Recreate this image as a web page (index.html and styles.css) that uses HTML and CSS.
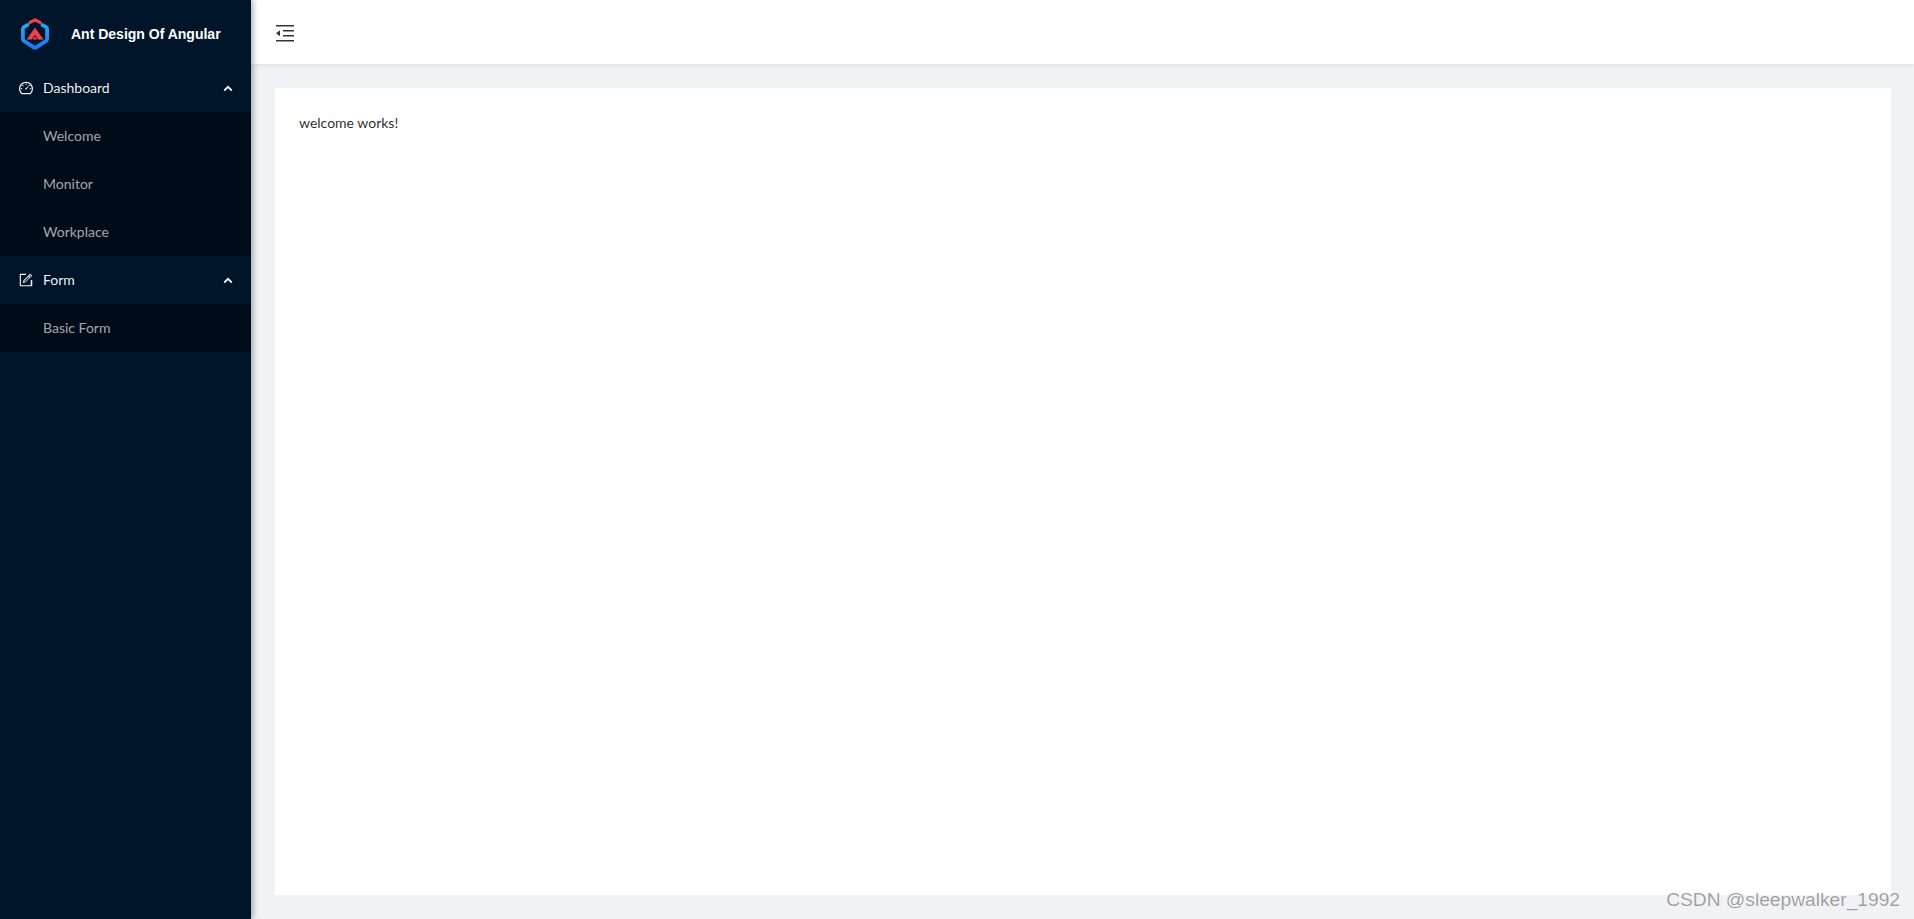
FILE: index.html
```html
<!DOCTYPE html>
<html lang="en">
<head>
<meta charset="utf-8">
<title>Ant Design Of Angular</title>
<link rel="stylesheet" href="styles.css">
</head>
<body>
<div class="layout">
  <aside class="sider">
    <div class="logo">
      <svg class="logo-mark" viewBox="0 0 28 32" width="28" height="32" aria-hidden="true">
        <defs>
          <linearGradient id="hexb" x1="0" y1="0" x2="0" y2="1">
            <stop offset="0" stop-color="#22a7f5"/>
            <stop offset="1" stop-color="#1a7df2"/>
          </linearGradient>
        </defs>
        <path d="M6.500 7 2.900 9.200Q1.900 9.800 1.900 11V21Q1.900 22.200 2.900 22.800L12.800 29.300Q14 30 15.200 29.300L25.100 22.800Q26.100 22.200 26.100 21V11Q26.100 9.800 25.100 9.200L21.500 7" fill="none" stroke="url(#hexb)" stroke-width="3.800" stroke-linejoin="round" stroke-linecap="round"/>
        <path d="M9 4.400 14 1.800 19 4.400" fill="none" stroke="#f0414f" stroke-width="3.200" stroke-linecap="round" stroke-linejoin="round"/>
        <path d="M14 10 6 21.300H10.600L14 16.500 17.400 21.300H22Z" fill="#f0414f" stroke="#f0414f" stroke-width=".6" stroke-linejoin="round"/>
        <path d="M11.500 21.500H16.500L14 18.200Z" fill="#f0414f"/>
      </svg>
      <h1 class="logo-title">Ant Design Of Angular</h1>
    </div>
    <nav class="menu">
      <div class="menu-head">
        <svg class="menu-icon" viewBox="64 64 896 896" width="14" height="14" fill="currentColor" aria-hidden="true"><path d="M924.800 385.600a446.700 446.700 0 0 0-96-142.400 446.700 446.700 0 0 0-142.400-96C631.100 123.800 572.500 112 512 112s-119.100 11.800-174.400 35.200a446.700 446.700 0 0 0-142.400 96 446.700 446.700 0 0 0-96 142.400C75.800 440.900 64 499.500 64 560c0 132.700 58.300 257.700 159.900 343.100l1.700 1.400c5.800 4.800 13.100 7.500 20.600 7.500h531.700c7.500 0 14.800-2.700 20.600-7.500l1.700-1.400C901.700 817.700 960 692.700 960 560c0-60.500-11.900-119.100-35.200-174.400zM761.400 836H262.600A371.120 371.120 0 0 1 140 560c0-99.400 38.700-192.800 109-263 70.300-70.300 163.700-109 263-109 99.400 0 192.800 38.700 263 109 70.300 70.300 109 163.700 109 263 0 105.600-44.800 205.400-122.600 276z"/><path d="M623.500 421.500a8.030 8.030 0 0 0-11.300 0L527.700 506c-18.700-5-39.400-.2-54.100 14.500a55.950 55.950 0 0 0 0 79.200 55.950 55.950 0 0 0 79.200 0 55.870 55.870 0 0 0 14.500-54.100l84.500-84.500c3.100-3.100 3.100-8.200 0-11.300l-28.300-28.300zM490 320h44c4.400 0 8-3.600 8-8v-80c0-4.400-3.600-8-8-8h-44c-4.400 0-8 3.600-8 8v80c0 4.400 3.600 8 8 8zm260 218v44c0 4.400 3.600 8 8 8h80c4.400 0 8-3.600 8-8v-44c0-4.400-3.600-8-8-8h-80c-4.400 0-8 3.600-8 8zm12.700-197.200-31.100-31.100a8.030 8.030 0 0 0-11.300 0l-56.600 56.600a8.030 8.030 0 0 0 0 11.300l31.100 31.100c3.100 3.100 8.200 3.100 11.300 0l56.600-56.600c3.100-3.100 3.100-8.200 0-11.300zm-458.600-31.100a8.030 8.030 0 0 0-11.300 0l-31.100 31.100a8.030 8.030 0 0 0 0 11.300l56.600 56.600c3.100 3.100 8.200 3.100 11.300 0l31.100-31.100c3.100-3.100 3.100-8.200 0-11.300l-56.600-56.600zM262 530h-80c-4.400 0-8 3.600-8 8v44c0 4.400 3.600 8 8 8h80c4.400 0 8-3.600 8-8v-44c0-4.400-3.600-8-8-8z"/></svg>
        <span class="menu-label">Dashboard</span>
        <svg class="menu-arrow" viewBox="0 0 10 7" width="10" height="7" aria-hidden="true"><path d="M1.300 5.500 5 1.800 8.700 5.500" fill="none" stroke="currentColor" stroke-width="1.800"/></svg>
      </div>
      <ul class="submenu">
        <li class="submenu-item">Welcome</li>
        <li class="submenu-item">Monitor</li>
        <li class="submenu-item">Workplace</li>
      </ul>
      <div class="menu-head">
        <svg class="menu-icon" viewBox="64 64 896 896" width="14" height="14" fill="currentColor" aria-hidden="true"><path d="M880 512h-56c-4.400 0-8 3.600-8 8v320H184V184h320c4.400 0 8-3.600 8-8v-56c0-4.400-3.600-8-8-8H144c-17.700 0-32 14.300-32 32v736c0 17.700 14.300 32 32 32h736c17.700 0 32-14.300 32-32V520c0-4.400-3.600-8-8-8h-24z"/><path d="m355.900 534.900-47.800 159.500c-1.700 5.600 3.600 10.800 9.200 9.100l159.300-47.900c1.300-.4 2.500-1.100 3.500-2.100l418.500-418.500c3.100-3.100 3.100-8.200 0-11.300L786.900 111.900a8.030 8.030 0 0 0-11.300 0L357.900 531.400c-.9.900-1.600 2.100-2 3.500zm426.500-345.800 52.500 52.500-60.700 60.700-52.500-52.500 60.700-60.700zM416.300 555.200l254.400-254.400 52.500 52.500-254.400 254.400-70.500 18 18-70.500z"/></svg>
        <span class="menu-label">Form</span>
        <svg class="menu-arrow" viewBox="0 0 10 7" width="10" height="7" aria-hidden="true"><path d="M1.300 5.500 5 1.800 8.700 5.500" fill="none" stroke="currentColor" stroke-width="1.800"/></svg>
      </div>
      <ul class="submenu">
        <li class="submenu-item">Basic Form</li>
      </ul>
    </nav>
  </aside>
  <div class="main">
    <header class="header">
      <svg class="trigger" viewBox="0 0 18 17" width="18" height="17" aria-hidden="true"><path d="M0 0h18v1.500H0zM7 5h11v1.500H7zM7 10h11v1.500H7zM0 15h18v1.500H0z" fill="#333"/><path d="M0 8.300 4 5.300v6z" fill="#333"/></svg>
    </header>
    <main class="content">
      <div class="panel">welcome works!</div>
    </main>
  </div>
</div>
<div class="watermark">CSDN @sleepwalker_1992</div>
</body>
</html>
```

FILE: styles.css
```css
* { box-sizing: border-box; }
html, body { height: 100%; margin: 0; overflow: hidden; }
body {
  font-family: Lato, "Open Sans", sans-serif;
  font-size: 14px;
  color: rgba(0, 0, 0, .85);
  background: #f0f2f5;
}
.layout { display: flex; height: 100%; }
.sider {
  width: 251px;
  flex: none;
  background: #001529;
  box-shadow: 2px 0 6px rgba(0, 21, 41, .35);
  position: relative;
  z-index: 2;
}
.logo {
  height: 64px;
  display: flex;
  align-items: center;
  padding: 4px 0 0 21px;
  gap: 22px;
}
.logo-mark { flex: none; }
.logo-title {
  margin: 0;
  font-family: "Liberation Sans", Arial, sans-serif;
  font-size: 14px;
  font-weight: 700;
  color: #fff;
  white-space: nowrap;
}
.menu-head {
  height: 48px;
  display: flex;
  align-items: center;
  padding: 0 18px 0 19px;
  color: rgba(255, 255, 255, .95);
}
.menu-icon { flex: none; margin-right: 10px; }
.menu-label { flex: 1; padding-bottom: 2px; }
.menu-arrow { flex: none; }
.submenu {
  list-style: none;
  margin: 0;
  padding: 0;
  background: #000c17;
}
.submenu-item {
  height: 48px;
  line-height: 48px;
  padding-left: 43px;
  color: rgba(255, 255, 255, .65);
}
.main { flex: 1; display: flex; flex-direction: column; min-width: 0; }
.header {
  height: 64px;
  flex: none;
  background: #fff;
  box-shadow: 0 1px 4px rgba(0, 21, 41, .08);
  display: flex;
  align-items: center;
  padding: 2px 0 0 25px;
  position: relative;
}
.content { flex: 1; padding: 24px 23px 24px 24px; display: flex; }
.panel {
  flex: 1;
  background: #fff;
  padding: 24px;
  line-height: 22px;
}
.trigger { display: block; }
.watermark {
  position: absolute;
  right: 14px;
  bottom: 8px;
  font-family: "Liberation Sans", Arial, sans-serif;
  font-size: 19.200px;
  line-height: 22px;
  color: rgba(0, 0, 0, .38);
  text-shadow: 0 0 1px rgba(255, 255, 255, .8);
}
```
